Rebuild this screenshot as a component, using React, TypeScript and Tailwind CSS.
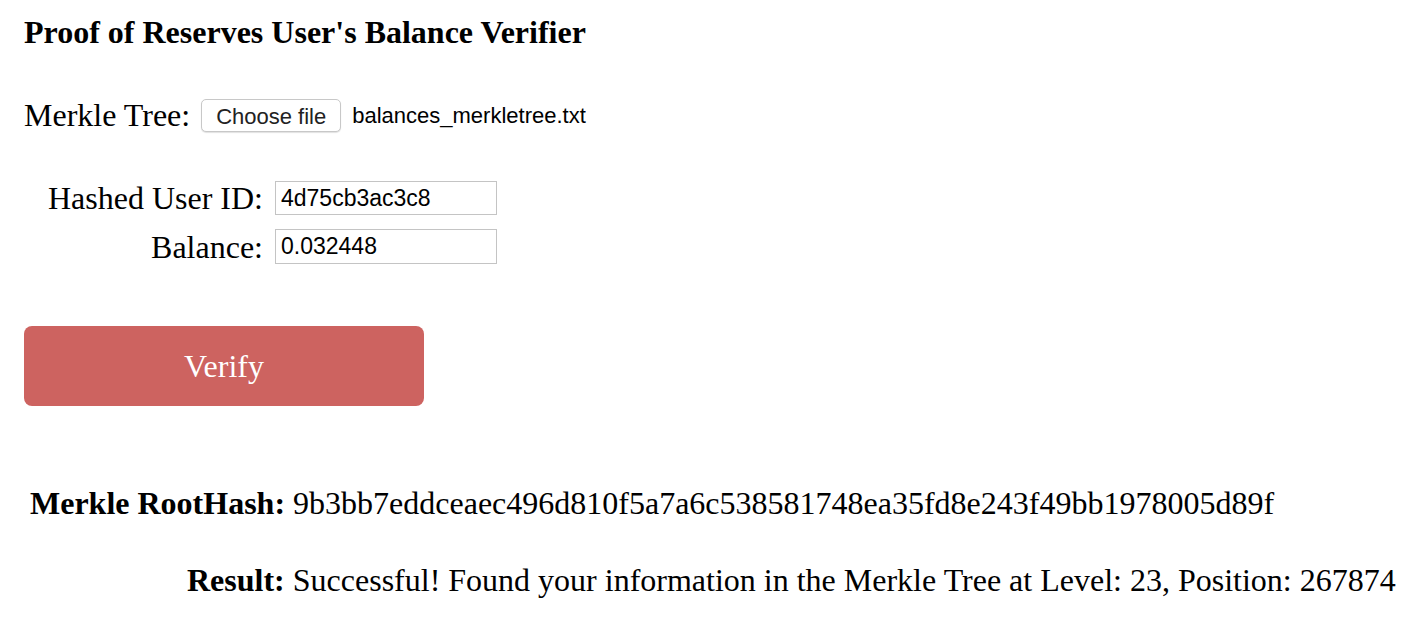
export default function App() {
  const serif = "font-['Liberation_Serif','Times_New_Roman',serif]";
  const sans = "font-['Liberation_Sans',Arial,sans-serif]";
  return (
    <div className={`${serif} text-black bg-white min-h-[628px] w-[1416px] pl-6 pt-[14px]`}>
      <h2 className="text-[32px] font-bold leading-[36px]">Proof of Reserves User's Balance Verifier</h2>

      <div className="flex items-center mt-[48px] h-[34px]">
        <span className="text-[32px] leading-[34px]">Merkle Tree:</span>
        <button
          className={`${sans} ml-[11px] h-[33px] w-[140px] rounded-[5px] border border-[#c8c8c8] bg-white text-[22px] text-[#222] shadow-[0_1px_1px_rgba(0,0,0,0.12)]`}
        >
          Choose file
        </button>
        <span className={`${sans} ml-[11px] text-[22px]`}>balances_merkletree.txt</span>
      </div>

      <div className="mt-[49px] flex flex-col gap-[14px]">
        <div className="flex items-center">
          <label className="w-[239px] text-right text-[32px] leading-[34px]">Hashed User ID:</label>
          <input
            readOnly
            value="4d75cb3ac3c8"
            className={`${sans} ml-[12px] h-[34px] w-[222px] border border-[#c4c4c4] px-[5px] text-[23px] outline-none`}
          />
        </div>
        <div className="flex items-center">
          <label className="w-[239px] text-right text-[32px] leading-[34px]">Balance:</label>
          <input
            readOnly
            value="0.032448"
            className={`${sans} ml-[12px] h-[35px] w-[222px] border border-[#c4c4c4] px-[5px] text-[23px] outline-none`}
          />
        </div>
      </div>

      <button className="mt-[62px] h-[80px] w-[400px] rounded-[8px] bg-[#cd6360] text-[32px] text-white">
        Verify
      </button>

      <div className="mt-[79px] pl-[6px] text-[32px] leading-[36px]">
        <span className="font-bold">Merkle RootHash:</span> 9b3bb7eddceaec496d810f5a7a6c538581748ea35fd8e243f49bb1978005d89f
      </div>

      <div className="mt-[41px] pl-[163px] text-[32px] leading-[36px]">
        <span className="font-bold">Result:</span> Successful! Found your information in the Merkle Tree at Level: 23, Position: 267874
      </div>
    </div>
  );
}
